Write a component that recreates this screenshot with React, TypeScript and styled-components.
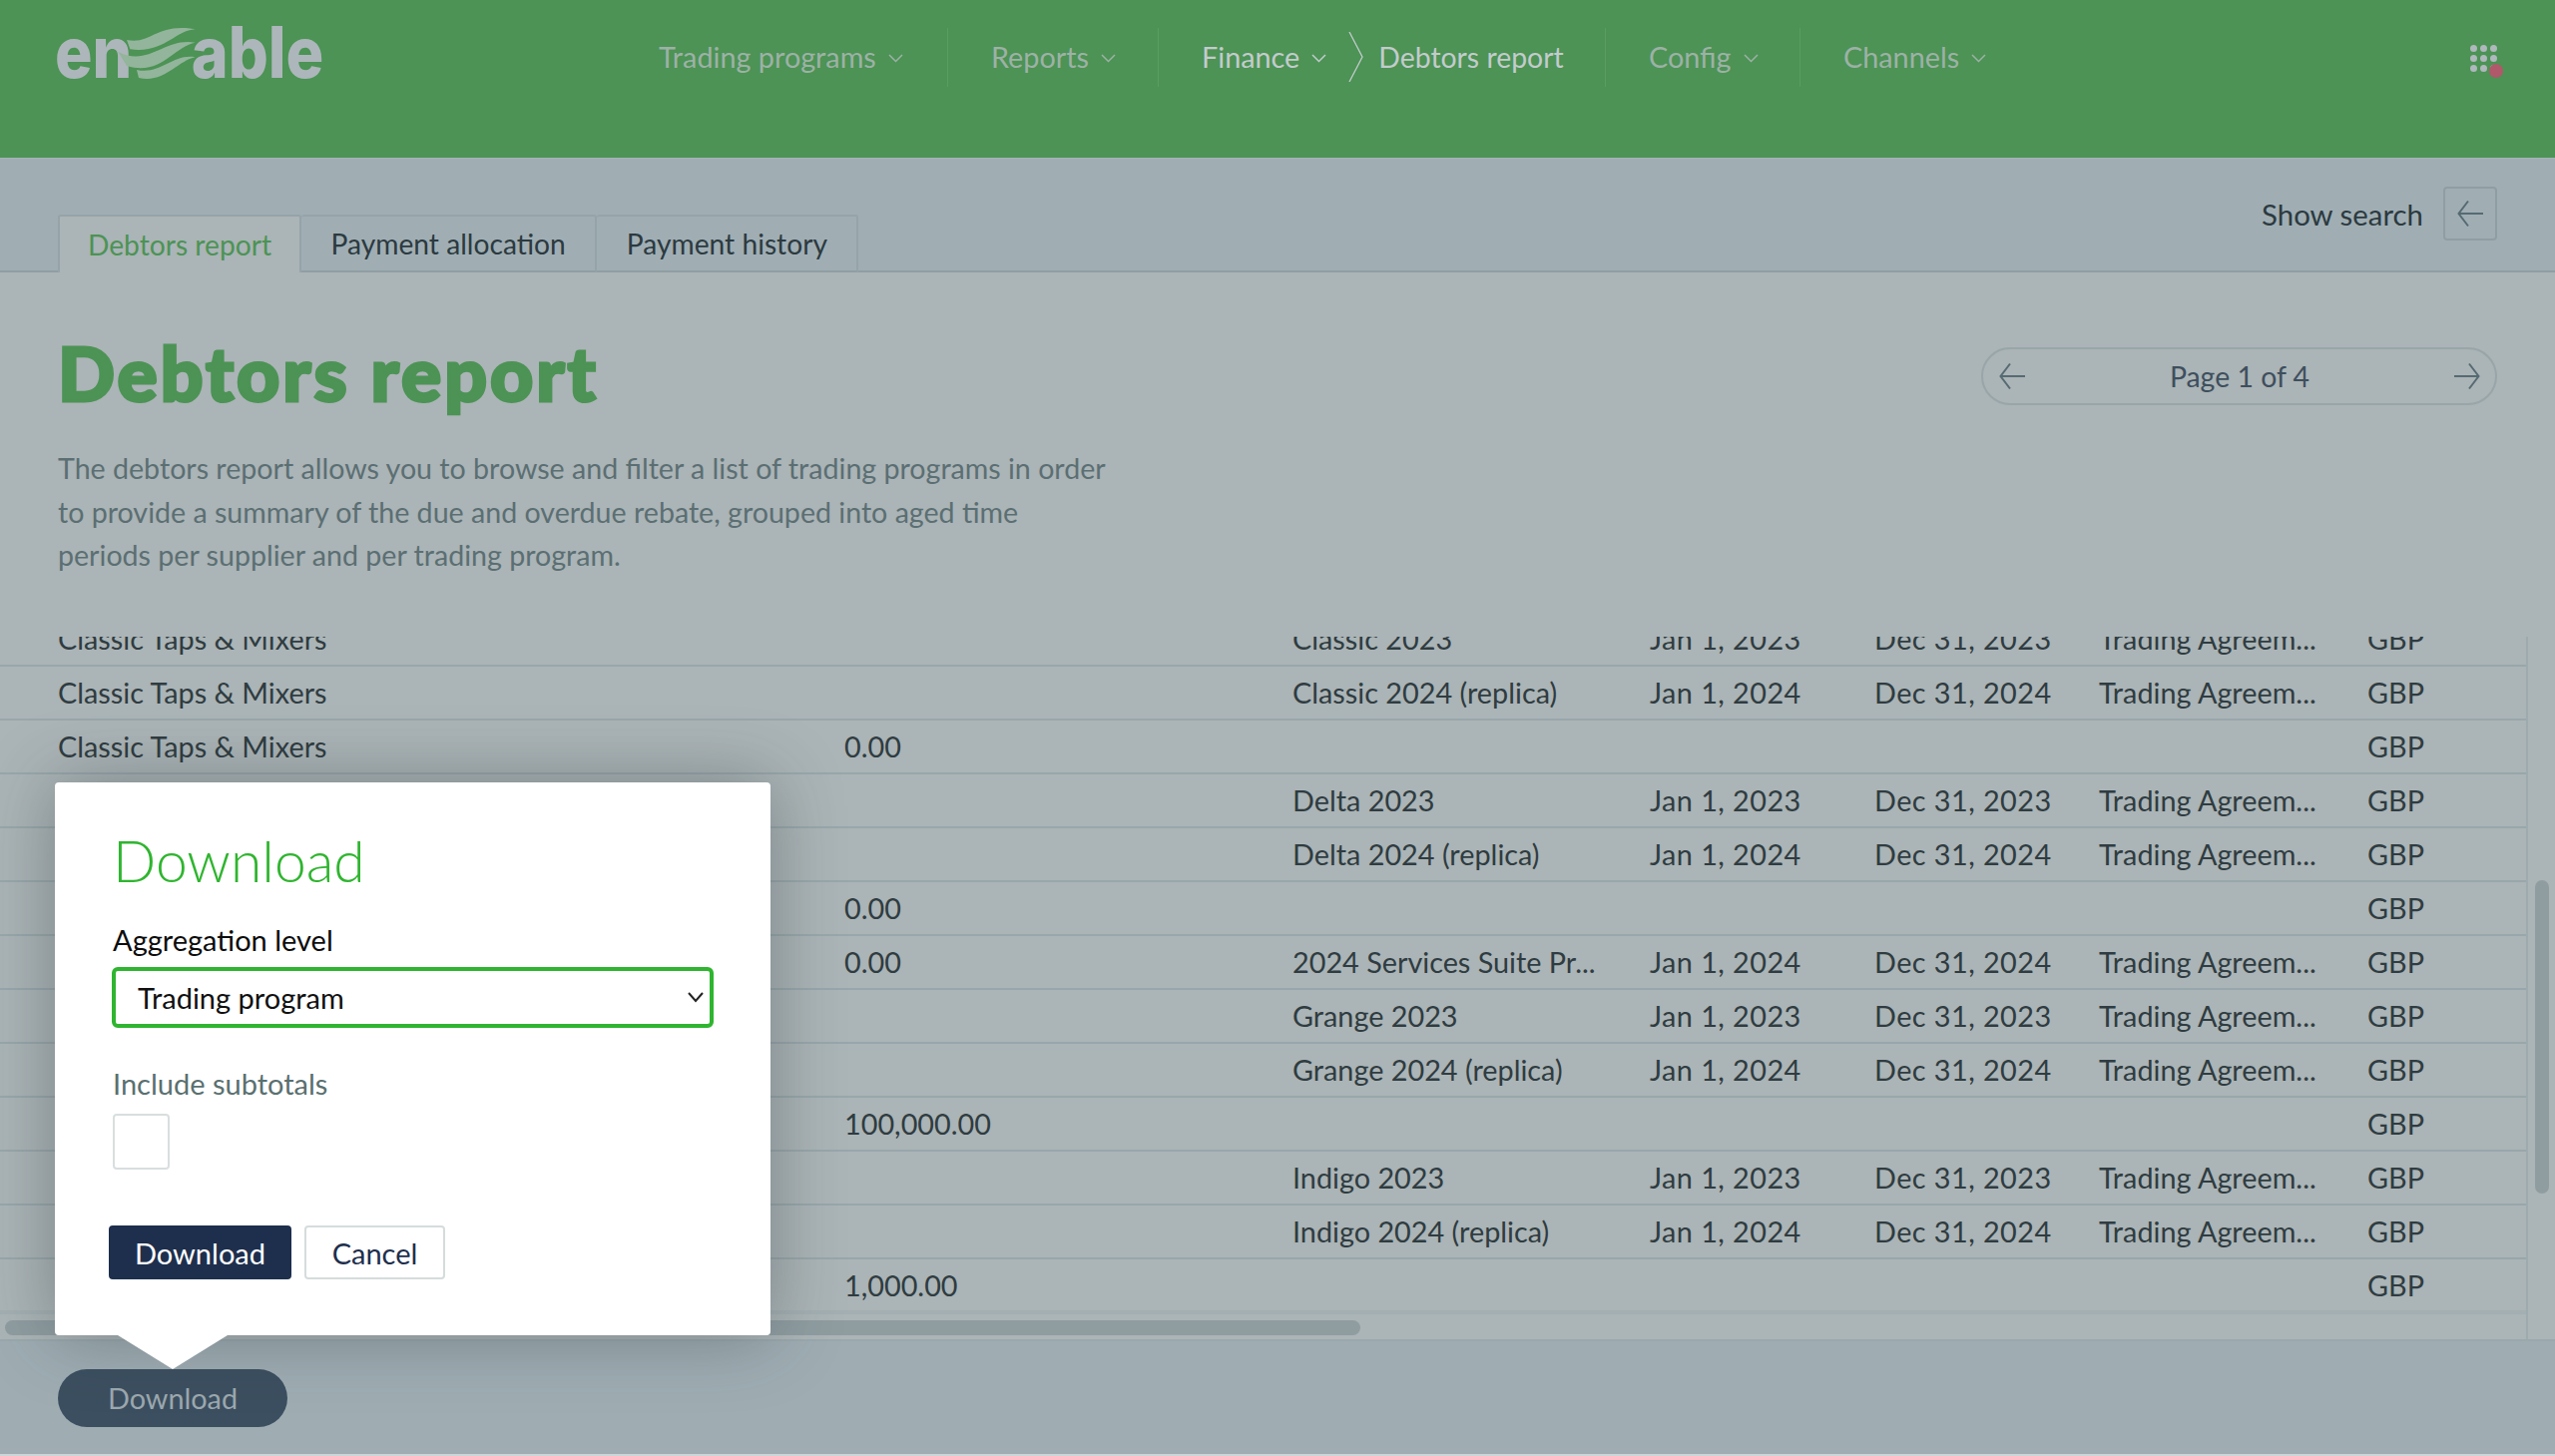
import React from "react";
import styled, { createGlobalStyle } from "styled-components";

const Global = createGlobalStyle`
  html, body { margin: 0; padding: 0; background: #9fadb3; }
  * { box-sizing: border-box; }
  body { font-family: Lato, "Open Sans", "Liberation Sans", sans-serif; }
`;

const Page = styled.div`
  position: relative;
  width: 2560px;
  height: 1459px;
  overflow: hidden;
  display: flex;
  flex-direction: column;
  font-size: 28.8px;
  background: #abb4b6;
`;

const Header = styled.header`
  flex: none;
  height: 158px;
  background: #4c9355;
  display: flex;
  align-items: flex-start;
  padding: 25px 24px 0 57px;
`;

const LogoBox = styled.svg`
  flex: none;
  width: 266px;
  height: 54px;
  overflow: visible;
`;

const Nav = styled.nav`
  display: flex;
  align-items: stretch;
  height: 59px;
  margin: 3px 0 0 294px;
  flex: 1;
`;

const NavItem = styled.div<{ $active?: boolean; $w: number; $last?: boolean }>`
  flex: none;
  width: ${(p) => p.$w}px;
  padding-left: 43px;
  display: flex;
  align-items: center;
  gap: 12px;
  font-size: 28.8px;
  padding-bottom: 1px;
  color: ${(p) => (p.$active ? "#c3cbcc" : "#9db1a6")};
  border-right: ${(p) => (p.$last ? "none" : "1px solid #5c9c64")};
  white-space: nowrap;
`;

const Crumb = styled.svg`
  flex: none;
  width: 16px;
  height: 50px;
  margin: 0 2px 0 10px;
  align-self: center;
`;

const CrumbText = styled.span`
  font-size: 28.4px;
`;

const AppsWrap = styled.div`
  position: relative;
  flex: none;
  display: grid;
  grid-template-columns: repeat(3, 7px);
  grid-auto-rows: 7px;
  gap: 3px;
  margin-top: 20px;
  margin-right: 34px;
`;

const AppDot = styled.span`
  width: 7px;
  height: 7px;
  border-radius: 50%;
  background: #afb8bc;
`;

const RedDot = styled.span`
  position: absolute;
  right: -6px;
  bottom: -6px;
  width: 14px;
  height: 14px;
  border-radius: 50%;
  background: #b0596a;
`;

const SubBar = styled.div`
  flex: none;
  height: 115px;
  background: #a0aeb4;
  border-top: 1px solid #a6b3b8;
  border-bottom: 2px solid #8f9ea3;
  display: flex;
  align-items: flex-end;
  justify-content: space-between;
  padding: 0 58px 0 58px;
`;

const Tabs = styled.div`
  display: flex;
  margin-bottom: -2px;
`;

const Tab = styled.div<{ $active?: boolean }>`
  height: 58px;
  padding: 0 ${(p) => (p.$active ? 28 : 29.5)}px;
  display: flex;
  align-items: center;
  font-size: 28.2px;
  border: 2px solid #95a4a9;
  border-left-width: ${(p) => (p.$active ? 2 : 0)}px;
  border-bottom: ${(p) => (p.$active ? "none" : "2px solid #8f9ea3")};
  border-radius: 3px 3px 0 0;
  background: ${(p) => (p.$active ? "#abb4b6" : "transparent")};
  color: ${(p) => (p.$active ? "#4c9355" : "#2c3a40")};
`;

const SearchToggle = styled.div`
  align-self: flex-start;
  margin-top: 28px;
  display: flex;
  align-items: center;
  gap: 20px;
  color: #2c3a40;
  font-size: 29.4px;
`;

const IconBox = styled.div`
  width: 54px;
  height: 54px;
  border: 2px solid #8f9ea3;
  border-radius: 4px;
  display: flex;
  align-items: center;
  justify-content: center;
`;

const Arrow = styled.svg<{ $flip?: boolean }>`
  width: 28px;
  height: 28px;
  fill: none;
  stroke: #566a72;
  stroke-width: 2;
  transform: ${(p) => (p.$flip ? "scaleX(-1)" : "none")};
`;

const Content = styled.main`
  flex: none;
  height: 1071px;
  background: #abb4b6;
  display: flex;
  flex-direction: column;
  border-bottom: 2px solid #9aa9ad;
`;

const Intro = styled.section`
  flex: none;
  height: 365px;
  padding: 0 58px;
  display: flex;
  justify-content: space-between;
  align-items: flex-start;
`;

const IntroText = styled.div`
  display: flex;
  flex-direction: column;
`;

const Title = styled.h1`
  margin: 58px 0 0;
  font-size: 75px;
  line-height: 84px;
  font-weight: 900;
  color: #4c9355;
  letter-spacing: 3px;
  -webkit-text-stroke: 3px #4c9355;
`;

const Lead = styled.p`
  margin: 33px 0 0;
  width: 1056px;
  font-size: 28.6px;
  line-height: 43.5px;
  color: #5b6f73;
`;

const Pager = styled.div`
  margin-top: 75px;
  width: 517px;
  height: 58px;
  border: 2px solid #98a6a9;
  border-radius: 29px;
  display: flex;
  align-items: center;
  justify-content: space-between;
  padding: 0 14px 0 15px;
  color: #3e4f5e;
  font-size: 28.4px;
`;

const TableArea = styled.section`
  flex: 1;
  display: flex;
  min-height: 0;
  position: relative;
`;

const TableColumn = styled.div`
  width: 2533px;
  border-right: 2px solid #9dabaf;
  display: flex;
  flex-direction: column;
`;

const Rows = styled.div`
  height: 679px;
  overflow: hidden;
  border-bottom: 4px solid #a3afb2;
`;

const Row = styled.div<{ $clip?: boolean }>`
  height: 54px;
  margin-top: ${(p) => (p.$clip ? -24 : 0)}px;
  display: grid;
  grid-template-columns: 788px 449px 358px 225px 225px 269px 1fr;
  align-items: center;
  padding: 0 0 1px 58px;
  border-bottom: 2px solid #98a7ab;
  color: #2f3c41;
  font-size: 28.8px;
  white-space: nowrap;
`;

const DateCell = styled.span`
  letter-spacing: 0.45px;
`;

const HTrack = styled.div`
  flex: 1;
  position: relative;
`;

const HThumb = styled.div`
  position: absolute;
  left: 5px;
  top: 6px;
  width: 1358px;
  height: 15px;
  border-radius: 8px;
  background: #8f9da1;
`;

const VTrack = styled.div`
  flex: 1;
  position: relative;
`;

const VThumb = styled.div`
  position: absolute;
  left: 7px;
  top: 244px;
  width: 14px;
  height: 314px;
  border-radius: 7px;
  background: #8f9da1;
`;

const Footer = styled.footer`
  flex: 1;
  background: #9fadb3;
  padding: 28px 58px 0;
  border-bottom: 2px solid #cdd5d8;
`;

const DownloadPill = styled.button`
  width: 230px;
  height: 58px;
  border: none;
  border-radius: 29px;
  background: #3c4f60;
  color: #9ca8af;
  font: inherit;
  font-size: 28.8px;
  padding: 0;
`;

const Popover = styled.div`
  position: absolute;
  left: 55px;
  top: 784px;
  width: 717px;
  height: 554px;
  background: #fff;
  border-radius: 4px;
  box-shadow: 0 0 70px rgba(40, 50, 55, 0.38);
  padding: 0 58px;
  display: flex;
  flex-direction: column;
  align-items: flex-start;
  font-size: 29px;
`;

const Beak = styled.svg`
  position: absolute;
  left: 63px;
  top: 554px;
  width: 110px;
  height: 34px;
  fill: #fff;
`;

const PopTitle = styled.h2`
  margin: 45px 0 0;
  font-size: 57px;
  line-height: 66px;
  font-weight: 300;
  color: #2fb52f;
`;

const FieldLabel = styled.label<{ $muted?: boolean }>`
  display: block;
  line-height: 36px;
  color: ${(p) => (p.$muted ? "#5a7070" : "#0d0d0d")};
`;

const FirstLabel = styled(FieldLabel)`
  margin-top: 29px;
`;

const SecondLabel = styled(FieldLabel)`
  margin-top: 38px;
`;

const SelectWrap = styled.div`
  position: relative;
  margin-top: 9px;
  width: 603px;
  height: 61px;
  margin-left: -1px;
`;

const NativeSelect = styled.select`
  width: 100%;
  height: 100%;
  appearance: none;
  background: #fff;
  border: 4px solid #2fb52f;
  border-radius: 6px;
  padding: 0 0 0 22px;
  font: inherit;
  color: #111;
  outline: none;
`;

const SelectChevron = styled.svg`
  position: absolute;
  right: 10px;
  top: 24px;
  width: 16px;
  height: 12px;
  fill: none;
  stroke: #222;
  stroke-width: 2;
  pointer-events: none;
`;

const CheckBox = styled.input`
  appearance: none;
  display: block;
  margin: 12px 0 0;
  width: 57px;
  height: 56px;
  border: 2px solid #d9dedf;
  border-radius: 4px;
  background: #fff;
`;

const Actions = styled.div`
  margin: 56px 0 0 -4px;
  display: flex;
  gap: 13px;
`;

const ActionButton = styled.button<{ $primary?: boolean }>`
  height: 54px;
  width: ${(p) => (p.$primary ? 183 : 141)}px;
  border-radius: 4px;
  border: 2px solid ${(p) => (p.$primary ? "#1e2f4d" : "#d5dcdc")};
  background: ${(p) => (p.$primary ? "#1e2f4d" : "#fff")};
  color: ${(p) => (p.$primary ? "#fff" : "#1e2f4d")};
  font: inherit;
  padding: 0;
`;

const Chev = styled.svg`
  flex: none;
  width: 15px;
  height: 9px;
  fill: none;
  stroke: currentColor;
  stroke-width: 1.5;
  margin-top: 2px;
`;

const NavChevron = () => (
  <Chev viewBox="0 0 15 9">
    <path d="M1 1l6.5 6.5L14 1" />
  </Chev>
);

const ArrowLeftIcon = ({ flip }: { flip?: boolean }) => (
  <Arrow viewBox="0 0 28 28" $flip={flip}>
    <path d="M27 14H3M12 1.5L2.5 14 12 26.5" />
  </Arrow>
);

const Logo = () => (
  <LogoBox viewBox="52 45 798 162">
    <g fontFamily="Inter, sans-serif" fontWeight="800" fill="#adb6ba" fontSize="213">
      <text x="46" y="203" textLength="232" lengthAdjust="spacingAndGlyphs">en</text>
      <text x="456" y="203" textLength="398" lengthAdjust="spacingAndGlyphs">able</text>
    </g>
    <g fill="#93b59b">
      <path d="M262 90C335 106 350 38 468 58C405 62 375 132 272 118Z" />
      <path d="M236 126C330 172 375 82 468 98C405 108 365 200 262 168Z" />
      <path d="M292 180C365 196 400 130 468 142C415 152 375 222 298 204Z" />
    </g>
  </LogoBox>
);

type RowData = [string, string, string, string, string, string];
const rows: RowData[] = [
  ["Classic Taps & Mixers", "", "Classic 2023", "Jan 1, 2023", "Dec 31, 2023", "Trading Agreem..."],
  ["Classic Taps & Mixers", "", "Classic 2024 (replica)", "Jan 1, 2024", "Dec 31, 2024", "Trading Agreem..."],
  ["Classic Taps & Mixers", "0.00", "", "", "", ""],
  ["", "", "Delta 2023", "Jan 1, 2023", "Dec 31, 2023", "Trading Agreem..."],
  ["", "", "Delta 2024 (replica)", "Jan 1, 2024", "Dec 31, 2024", "Trading Agreem..."],
  ["", "0.00", "", "", "", ""],
  ["", "0.00", "2024 Services Suite Pr...", "Jan 1, 2024", "Dec 31, 2024", "Trading Agreem..."],
  ["", "", "Grange 2023", "Jan 1, 2023", "Dec 31, 2023", "Trading Agreem..."],
  ["", "", "Grange 2024 (replica)", "Jan 1, 2024", "Dec 31, 2024", "Trading Agreem..."],
  ["", "100,000.00", "", "", "", ""],
  ["", "", "Indigo 2023", "Jan 1, 2023", "Dec 31, 2023", "Trading Agreem..."],
  ["", "", "Indigo 2024 (replica)", "Jan 1, 2024", "Dec 31, 2024", "Trading Agreem..."],
  ["", "1,000.00", "", "", "", ""],
];

export default function App() {
  return (
    <Page>
      <Global />
      <Header>
        <Logo />
        <Nav>
          <NavItem $w={333}>
            <span>Trading programs</span>
            <NavChevron />
          </NavItem>
          <NavItem $w={211}>
            <span>Reports</span>
            <NavChevron />
          </NavItem>
          <NavItem $active $w={448}>
            <span>Finance</span>
            <NavChevron />
            <Crumb viewBox="0 0 16 50">
              <path d="M1 0l13 25L1 50" fill="none" stroke="#c3cbcc" strokeWidth="1.3" />
            </Crumb>
            <CrumbText>Debtors report</CrumbText>
          </NavItem>
          <NavItem $w={195}>
            <span>Config</span>
            <NavChevron />
          </NavItem>
          <NavItem $w={220} $last>
            <span>Channels</span>
            <NavChevron />
          </NavItem>
        </Nav>
        <AppsWrap>
          {Array.from({ length: 9 }).map((_, i) => (
            <AppDot key={i} />
          ))}
          <RedDot />
        </AppsWrap>
      </Header>

      <SubBar>
        <Tabs>
          <Tab $active>Debtors report</Tab>
          <Tab>Payment allocation</Tab>
          <Tab>Payment history</Tab>
        </Tabs>
        <SearchToggle>
          <span>Show search</span>
          <IconBox>
            <ArrowLeftIcon />
          </IconBox>
        </SearchToggle>
      </SubBar>

      <Content>
        <Intro>
          <IntroText>
            <Title>Debtors report</Title>
            <Lead>
              The debtors report allows you to browse and filter a list of trading programs in order
              to provide a summary of the due and overdue rebate, grouped into aged time periods per
              supplier and per trading program.
            </Lead>
          </IntroText>
          <Pager>
            <ArrowLeftIcon />
            <span>Page 1 of 4</span>
            <ArrowLeftIcon flip />
          </Pager>
        </Intro>
        <TableArea>
          <TableColumn>
            <Rows>
              {rows.map((r, i) => (
                <Row key={i} $clip={i === 0}>
                  <span>{r[0]}</span>
                  <span>{r[1]}</span>
                  <span>{r[2]}</span>
                  <DateCell>{r[3]}</DateCell>
                  <DateCell>{r[4]}</DateCell>
                  <span>{r[5]}</span>
                  <span>GBP</span>
                </Row>
              ))}
            </Rows>
            <HTrack>
              <HThumb />
            </HTrack>
          </TableColumn>
          <VTrack>
            <VThumb />
          </VTrack>
        </TableArea>
      </Content>

      <Footer>
        <DownloadPill>Download</DownloadPill>
      </Footer>

      <Popover>
        <PopTitle>Download</PopTitle>
        <FirstLabel>Aggregation level</FirstLabel>
        <SelectWrap>
          <NativeSelect defaultValue="Trading program">
            <option>Trading program</option>
            <option>Supplier</option>
          </NativeSelect>
          <SelectChevron viewBox="0 0 16 12">
            <path d="M1 2l7 8 7-8" />
          </SelectChevron>
        </SelectWrap>
        <SecondLabel $muted>Include subtotals</SecondLabel>
        <CheckBox type="checkbox" />
        <Actions>
          <ActionButton $primary>Download</ActionButton>
          <ActionButton>Cancel</ActionButton>
        </Actions>
        <Beak viewBox="0 0 110 34">
          <path d="M0 0H110L55 34Z" />
        </Beak>
      </Popover>
    </Page>
  );
}
